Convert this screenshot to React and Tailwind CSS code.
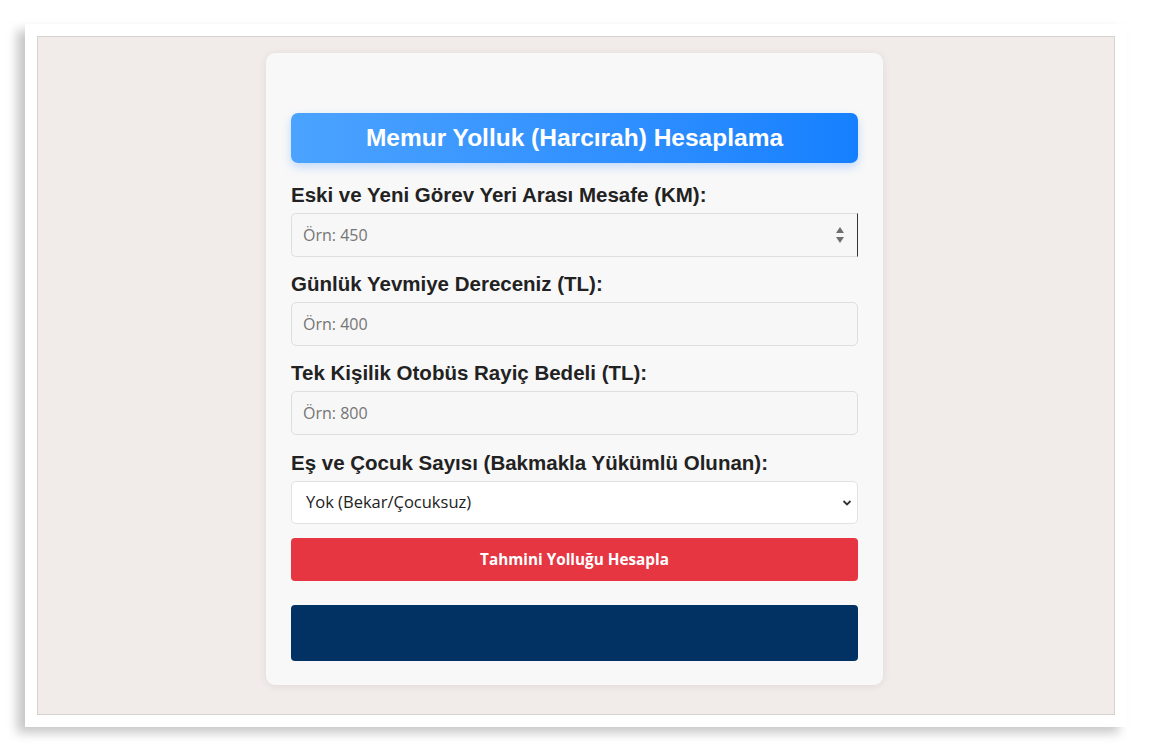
import { useState } from 'react';

const labelCls =
  "block mb-[6px] text-[20.5px] leading-[24px] font-bold text-[#222] font-['Liberation_Sans',Arial,sans-serif]";
const inputCls =
  "w-full h-[44px] rounded-[5px] border border-[#dedede] bg-[#f7f7f7] px-[11px] text-[16px] text-[#333] placeholder:text-[#757575] font-['Open_Sans',sans-serif] outline-none";

function Field({ label, placeholder, spinner, first }) {
  const [value, setValue] = useState('');
  return (
    <div className={first ? 'mt-[20px]' : 'mt-[15px]'}>
      <label className={labelCls}>{label}</label>
      <div className="relative">
        <input
          type="text"
          inputMode="numeric"
          value={value}
          onChange={(e) => setValue(e.target.value)}
          placeholder={placeholder}
          className={`${inputCls} ${spinner ? 'border-r-[#333] rounded-r-none' : ''}`}
        />
        {spinner && (
          <svg
            className="absolute right-[13px] top-[12px]"
            width="10"
            height="20"
            viewBox="0 0 10 20"
          >
            <path d="M5 2 L9 8 L1 8 Z" fill="#707070" />
            <path d="M1 12 L9 12 L5 18 Z" fill="#707070" />
          </svg>
        )}
      </div>
    </div>
  );
}

export default function App() {
  const [kids, setKids] = useState('0');

  return (
    <div className="min-h-[752px] w-full bg-white pt-[24px] pb-[25px] px-[25px]">
      <div className="mx-auto w-[1102px] h-[703px] bg-white p-[12px] shadow-[-8px_6px_10px_rgba(0,0,0,0.22)]">
        <div className="h-full w-full border border-[#d6d2d0] bg-[#f1ecea] flex pl-[228px] pt-[16px]">
          <div className="w-[617px] h-[632px] rounded-[9px] bg-[#f8f8f8] shadow-[0_1px_8px_rgba(0,0,0,0.08)] px-[25px] pt-[60px]">
            <div className="h-[50px] rounded-[7px] bg-gradient-to-r from-[#4ba3ff] to-[#1580ff] shadow-[0_4px_10px_rgba(30,128,255,0.25)] flex items-center justify-center">
              <h1 className="text-white text-[24.5px] font-bold font-['Liberation_Sans',Arial,sans-serif]">
                Memur Yolluk (Harcırah) Hesaplama
              </h1>
            </div>

            <Field first label="Eski ve Yeni Görev Yeri Arası Mesafe (KM):" placeholder="Örn: 450" spinner />
            <Field label="Günlük Yevmiye Dereceniz (TL):" placeholder="Örn: 400" />
            <Field label="Tek Kişilik Otobüs Rayiç Bedeli (TL):" placeholder="Örn: 800" />

            <div className="mt-[16px]">
              <label className={labelCls}>Eş ve Çocuk Sayısı (Bakmakla Yükümlü Olunan):</label>
              <div className="relative">
                <select
                  value={kids}
                  onChange={(e) => setKids(e.target.value)}
                  className="w-full h-[43px] appearance-none rounded-[5px] border border-[#e2e2e2] bg-white px-[14px] text-[16.5px] text-[#222] font-['Open_Sans',sans-serif] outline-none"
                >
                  <option value="0">Yok (Bekar/Çocuksuz)</option>
                  <option value="1">1 Kişi</option>
                  <option value="2">2 Kişi</option>
                  <option value="3">3 Kişi</option>
                  <option value="4">4 ve Üzeri</option>
                </select>
                <svg
                  className="absolute right-[6px] top-[18px] pointer-events-none"
                  width="10"
                  height="8"
                  viewBox="0 0 10 8"
                >
                  <path d="M1.5 2 L5 5.5 L8.5 2" fill="none" stroke="#333" strokeWidth="1.8" />
                </svg>
              </div>
            </div>

            <button className="mt-[14px] w-full h-[43px] rounded-[4px] bg-[#e53642] text-white text-[15.3px] font-bold font-['Open_Sans',sans-serif] cursor-pointer">
              Tahmini Yolluğu Hesapla
            </button>

            <div className="mt-[24px] h-[56px] rounded-[4px] bg-[#023163]"></div>
          </div>
        </div>
      </div>
    </div>
  );
}
